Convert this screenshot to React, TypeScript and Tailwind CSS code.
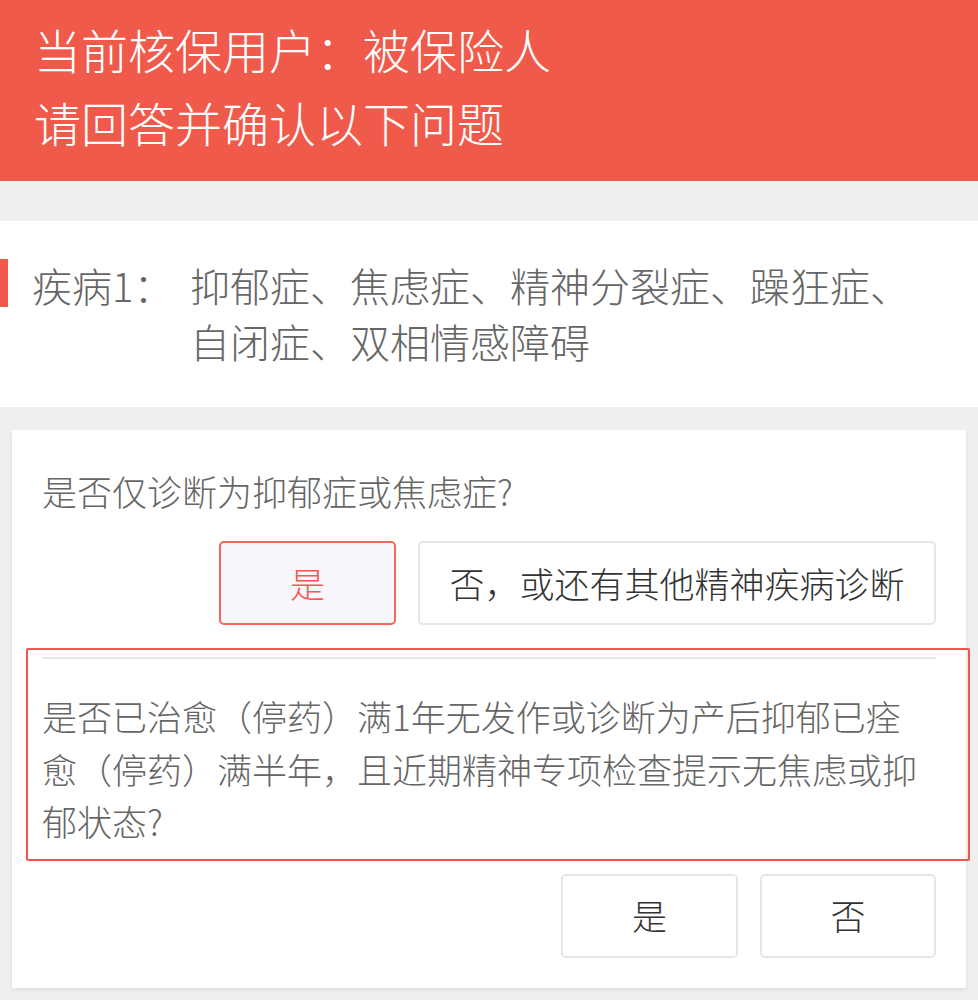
const font = { fontFamily: '"Noto Sans CJK SC", "Noto Sans", sans-serif' };

export default function App() {
  return (
    <div className="min-h-screen bg-[#efefef] font-light" style={font}>
      {/* Header */}
      <div className="bg-[#f05a4b] pl-[34px] pt-[12px] pb-[23px] text-white text-[47px] leading-[73px]">
        <div>当前核保用户：被保险人</div>
        <div>请回答并确认以下问题</div>
      </div>

      {/* Disease summary */}
      <div className="mt-[40px] bg-white pt-[36px] pb-[38px] pl-[32px] pr-[34px] relative">
        <div className="absolute left-0 top-[38px] w-[8px] h-[48px] bg-[#f05a4b]" />
        <div className="flex text-[40px] leading-[56px] text-[#666]">
          <div className="w-[158px] shrink-0">疾病1：</div>
          <div className="flex-1">抑郁症、焦虑症、精神分裂症、躁狂症、自闭症、双相情感障碍</div>
        </div>
      </div>

      {/* Question card */}
      <div className="mt-[23px] mx-[12px] bg-white pt-[35px] pb-[30px] px-[30px] shadow-[0_2px_4px_rgba(0,0,0,0.08)]">
        <div className="text-[35px] leading-[52px] text-[#666]">是否仅诊断为抑郁症或焦虑症?</div>
        <div className="mt-[24px] flex justify-end gap-[22px]">
          <button className="w-[177px] h-[84px] rounded-[5px] border-2 border-[#f4685b] bg-[#f9f7fd] text-[35px] text-[#f05a4b]">
            是
          </button>
          <button className="w-[518px] h-[84px] rounded-[5px] border-2 border-[#e3e6ea] bg-white text-[35px] text-[#333]">
            否，或还有其他精神疾病诊断
          </button>
        </div>

        <div className="relative mt-[32px]">
          <div className="h-[2px] bg-[#e6e8ec]" />
          <div className="mt-[31px] mr-[10px] text-[35px] leading-[52.5px] text-[#666]">
            是否已治愈（停药）满1年无发作或诊断为产后抑郁已痊愈（停药）满半年，且近期精神专项检查提示无焦虑或抑郁状态?
          </div>
          <div className="absolute -left-[16px] -right-[34px] -top-[9px] -bottom-[13px] border-2 border-[#f5544c] rounded-[2px] pointer-events-none" />
        </div>

        <div className="mt-[26px] flex justify-end gap-[22px]">
          <button className="w-[177px] h-[84px] rounded-[5px] border-2 border-[#e3e6ea] bg-white text-[35px] text-[#333]">
            是
          </button>
          <button className="w-[176px] h-[84px] rounded-[5px] border-2 border-[#e3e6ea] bg-white text-[35px] text-[#333]">
            否
          </button>
        </div>
      </div>
    </div>
  );
}
